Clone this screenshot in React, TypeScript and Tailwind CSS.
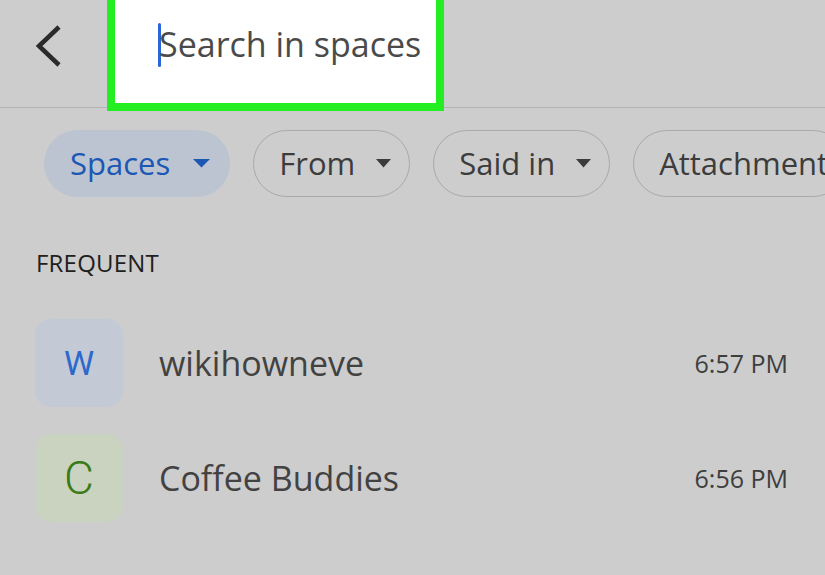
import React from 'react';

const Caret = ({ color, w }: { color: string; w: number }) => (
  <svg width={w} height="9" viewBox={`0 0 ${w} 9`} className="shrink-0">
    <path d={`M0 0 L${w} 0 L${w / 2} 8.5 Z`} fill={color} />
  </svg>
);

const Chip = ({ label, active, caret = true }: { label: string; active?: boolean; caret?: boolean }) => (
  <div
    className={
      active
        ? 'flex h-[67px] shrink-0 items-center gap-[23px] rounded-full bg-[#bcc4d1] pl-[26px] pr-[20px] text-[#1d57b4]'
        : 'flex h-[67px] shrink-0 items-center gap-[21px] rounded-full border-[1.5px] border-[#a9a9a9] pl-[25px] pr-[18px] text-[#3c3c3c]'
    }
  >
    <span className="text-[31px] leading-none">{label}</span>
    {caret && <Caret color={active ? '#1d57b4' : '#3c3c3c'} w={active ? 17 : 15} />}
  </div>
);

const Row = ({ letter, name, time, avatarBg, letterClass }: { letter: string; name: string; time: string; avatarBg: string; letterClass: string }) => (
  <div className="flex h-[88px] items-center">
    <div className={`flex h-[88px] w-[88px] shrink-0 items-center justify-center rounded-[16px] ${avatarBg}`}>
      <span className={`font-['Roboto',sans-serif] leading-none ${letterClass}`}>{letter}</span>
    </div>
    <span className="ml-[36px] flex-1 text-[34px] leading-none text-[#424242]">{name}</span>
    <span className="mr-[37px] text-[25px] leading-none text-[#3e3e3e]">{time}</span>
  </div>
);

export default function App() {
  return (
    <div className="h-[575px] w-[825px] overflow-hidden bg-[#cdcdcd] font-['Open_Sans',sans-serif]">
      {/* Top bar */}
      <div className="relative flex h-[108px] items-start border-b-[1.5px] border-[#b3b3b3]">
        <div className="flex h-[92px] w-[107px] items-center pl-[34px]">
          <svg width="30" height="44" viewBox="0 0 30 44">
            <path d="M25 3 L5 22 L25 41" fill="none" stroke="#2b2b2b" strokeWidth="4.5" />
          </svg>
        </div>
        <div className="relative z-10 flex h-[111px] w-[337px] items-start border-[8px] border-t-0 border-[#22ee22] bg-white">
          <div className="ml-[43px] mt-[23px] flex items-start">
            <div className="h-[44px] w-[3px] rounded-sm bg-[#2a66d9]" />
            <span className="-ml-[2px] -mt-[1px] text-[34px] leading-[44px] text-[#4a4a4a]">Search in spaces</span>
          </div>
        </div>
      </div>

      {/* Filter chips */}
      <div className="mt-[22px] flex gap-[23px] overflow-hidden pl-[44px]">
        <Chip label="Spaces" active />
        <Chip label="From" />
        <Chip label="Said in" />
        <Chip label="Attachment" caret={false} />
      </div>

      {/* Frequent */}
      <div className="mt-[54px] pl-[36px] text-[24px] leading-none tracking-[0.2px] text-[#202020]">FREQUENT</div>

      <div className="mt-[44px] flex flex-col gap-[27px] pl-[35px]">
        <Row letter="W" name="wikihowneve" time="6:57 PM" avatarBg="bg-[#c3cad5]" letterClass="text-[34px] text-[#2d68cc]" />
        <Row letter="C" name="Coffee Buddies" time="6:56 PM" avatarBg="bg-[#c9d3c0]" letterClass="text-[46px] font-light text-[#3a7a17]" />
      </div>
    </div>
  );
}
